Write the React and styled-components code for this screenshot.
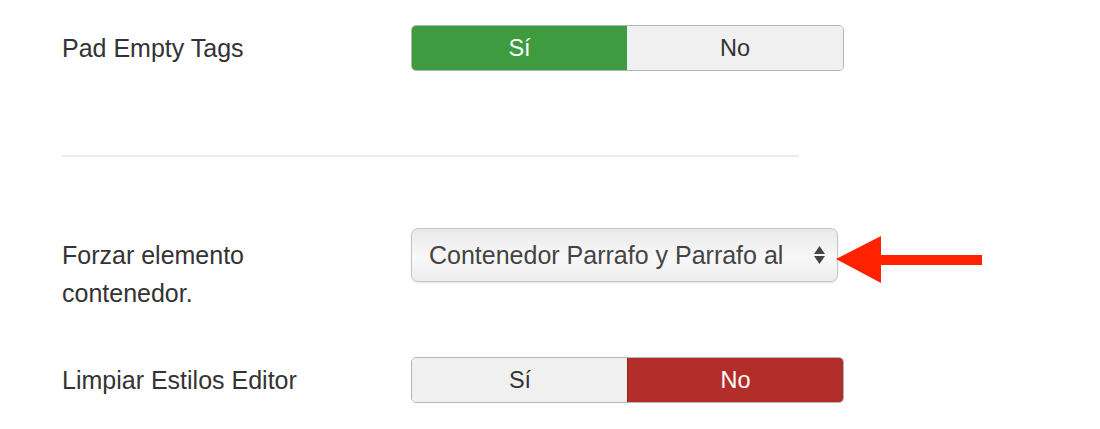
import React from "react";
import styled, { createGlobalStyle } from "styled-components";

const Global = createGlobalStyle`
  html, body { margin: 0; padding: 0; background: #fff; }
  body { font-family: "Liberation Sans", Arial, sans-serif; color: #333; }
`;

const Page = styled.div`
  width: 1100px;
  height: 429px;
  padding: 25px 0 0 62px;
  box-sizing: border-box;
  overflow: hidden;
`;

const Row = styled.div`
  display: grid;
  grid-template-columns: 349px auto;
  align-items: ${(p) => (p.$top ? "start" : "center")};
  margin-top: ${(p) => p.$mt || 0}px;
`;

const Label = styled.div`
  font-size: 25px;
  line-height: 38px;
  color: #333;
  padding-top: ${(p) => p.$pt || 0}px;
`;

const Toggle = styled.div`
  display: flex;
  width: 433px;
  height: 46px;
  box-sizing: border-box;
  border-radius: 5px;
  overflow: hidden;
  border: 1px solid #b4b4b4;
`;

const Seg = styled.div`
  flex: 0 0 ${(p) => p.$w}px;
  display: flex;
  align-items: center;
  justify-content: center;
  font-size: 23.5px;
  color: ${(p) => (p.$on ? "#fff" : "#333")};
  background: ${(p) =>
    p.$on === "green" ? "#3e9b40" : p.$on === "red" ? "#b32e2a" : "#f0f0f0"};
  box-shadow: ${(p) =>
    p.$on === "green"
      ? "inset 0 0 0 1px #2f7e31"
      : p.$on === "red"
      ? "inset 0 0 0 1px #8e2320"
      : "none"};
  margin: ${(p) => (p.$on ? "-1px" : "0")};
`;

const Divider = styled.div`
  width: 737px;
  height: 2px;
  background: #ececec;
  margin-top: 84px;
`;

const SelectWrap = styled.div`
  position: relative;
  width: 427px;
`;

const Select = styled.div`
  width: 427px;
  height: 54px;
  box-sizing: border-box;
  border: 1px solid #c6c6c6;
  border-radius: 7px;
  background: linear-gradient(#e9e9e9, #f8f8f8 55%, #ececec);
  box-shadow: 0 1px 2px rgba(0, 0, 0, 0.12);
  display: flex;
  align-items: center;
  justify-content: space-between;
  padding: 0 11px 0 17px;
  font-size: 25px;
  color: #444;
`;

const Arrows = styled.svg`
  width: 13px;
  height: 22px;
`;

const Pointer = styled.svg`
  position: absolute;
  left: 422px;
  top: 5px;
  width: 150px;
  height: 52px;
`;

export default function App() {
  return (
    <>
      <Global />
      <Page>
        <Row>
          <Label>Pad Empty Tags</Label>
          <Toggle>
            <Seg $w={217} $on="green">Sí</Seg>
            <Seg $w={216}>No</Seg>
          </Toggle>
        </Row>
        <Divider />
        <Row $top $mt={71}>
          <Label $pt={8}>
            Forzar elemento
            <br />
            contenedor.
          </Label>
          <SelectWrap>
            <Select>
              <span>Contenedor Parrafo y Parrafo al</span>
              <Arrows viewBox="0 0 13 22">
                <path d="M6.5 2 L12 10 L1 10 Z" fill="#444" />
                <path d="M1 12 L12 12 L6.5 20 Z" fill="#444" />
              </Arrows>
            </Select>
            <Pointer viewBox="0 0 150 52">
              <path
                d="M3 26 L48 3 L48 22 L149 22 L149 32 L48 32 L48 50 Z"
                fill="#ff2200"
              />
            </Pointer>
          </SelectWrap>
        </Row>
        <Row $mt={45}>
          <Label>Limpiar Estilos Editor</Label>
          <Toggle>
            <Seg $w={216}>Sí</Seg>
            <Seg $w={217} $on="red">No</Seg>
          </Toggle>
        </Row>
      </Page>
    </>
  );
}
